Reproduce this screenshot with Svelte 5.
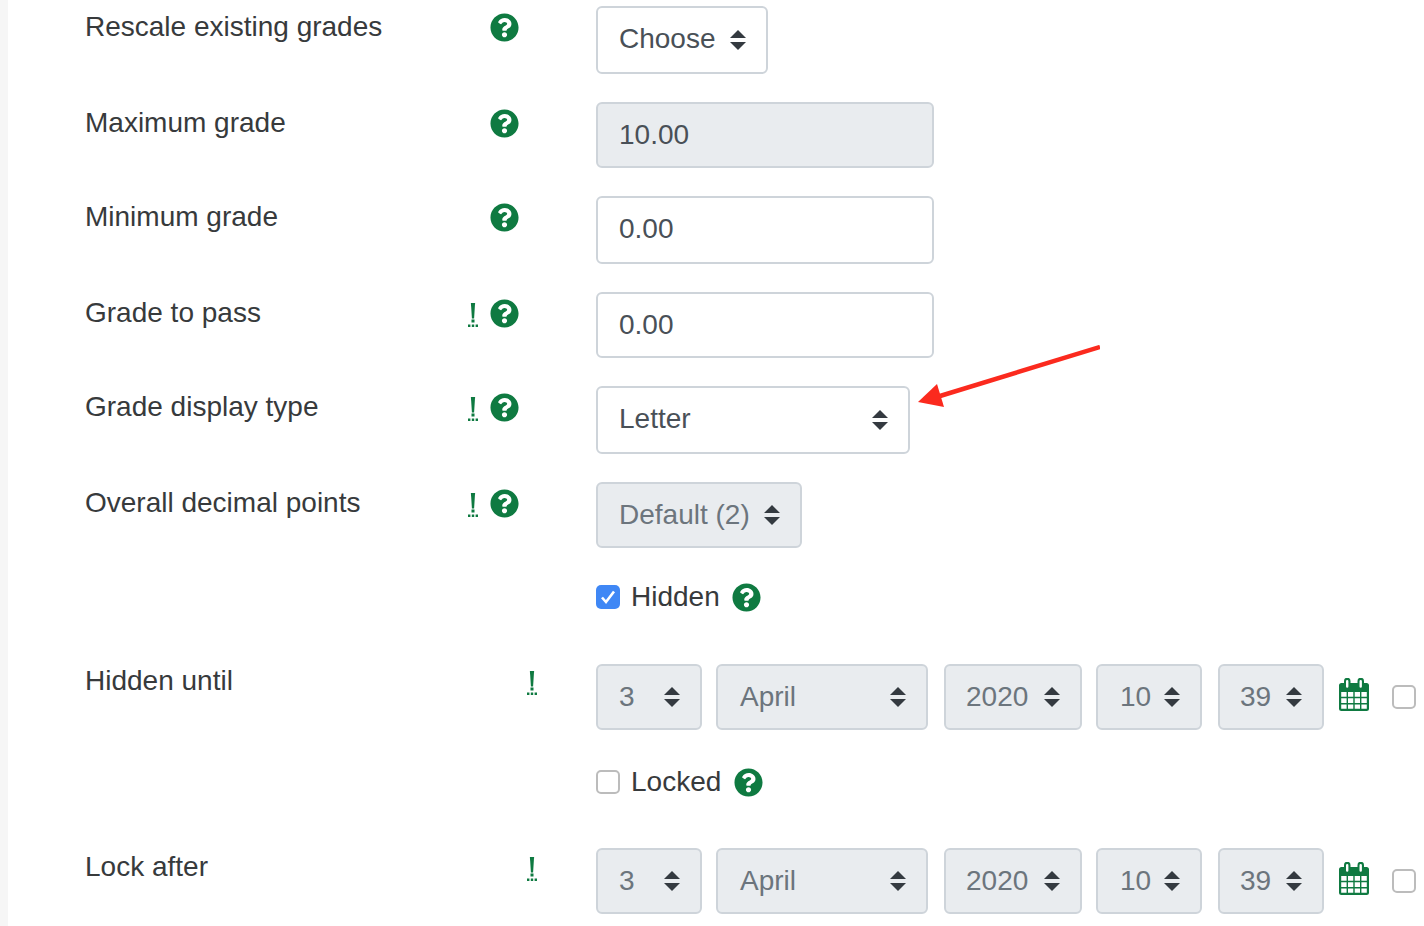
<script>
  const dateParts = [
    { value: '3', width: 106 },
    { value: 'April', width: 212 },
    { value: '2020', width: 138 },
    { value: '10', width: 106 },
    { value: '39', width: 106 }
  ];
  const helpPath = 'M504 256c0 136.997-111.043 248-248 248S8 392.997 8 256C8 119.083 119.043 8 256 8s248 111.083 248 248zM262.655 90c-54.497 0-89.255 22.957-116.549 63.758-3.536 5.286-2.353 12.415 2.715 16.258l34.699 26.31c5.205 3.947 12.621 3.008 16.665-2.122 17.864-22.658 30.113-35.797 57.303-35.797 20.429 0 45.698 13.148 45.698 32.958 0 14.976-12.363 22.667-32.534 33.976C247.128 238.528 216 254.941 216 296v4c0 6.627 5.373 12 12 12h56c6.627 0 12-5.373 12-12v-1.333c0-28.462 83.186-29.647 83.186-106.667 0-58.002-60.165-102-116.531-102zM256 338c-25.365 0-46 20.635-46 46 0 25.364 20.635 46 46 46s46-20.636 46-46c0-25.365-20.635-46-46-46z';
</script>

{#snippet help()}
  <svg class="help" viewBox="0 0 512 512" aria-hidden="true"><path d={helpPath} /></svg>
{/snippet}

{#snippet advanced()}
  <svg class="advanced" viewBox="0 0 10 24" aria-hidden="true">
    <path d="M2.900 0h4.200l-1 15.500H3.900z" />
    <rect x="3.500" y="16.500" width="3" height="3" />
    <rect x="0" y="21.500" width="2.400" height="2.500" />
    <rect x="3.800" y="21.500" width="2.400" height="2.500" />
    <rect x="7.600" y="21.500" width="2.400" height="2.500" />
  </svg>
{/snippet}

{#snippet caret()}
  <svg class="caret" viewBox="0 0 16 20" aria-hidden="true">
    <path d="M8 0l8 8H0zM0 12h16l-8 8z" />
  </svg>
{/snippet}

{#snippet calendar()}
  <svg class="calendar" viewBox="0 0 30 33" aria-hidden="true">
    <path fill-rule="evenodd" d="M2.500 5H5V3a3 3 0 0 1 6.500 0v2h7V3a3 3 0 0 1 6.500 0v2h2.500A2.500 2.500 0 0 1 30 7.500v23a2.500 2.500 0 0 1-2.500 2.500h-25A2.500 2.500 0 0 1 0 30.500v-23A2.500 2.500 0 0 1 2.500 5zM7 3.200v5.300a1.200 1.200 0 0 0 2.400 0V3.200a1.200 1.200 0 0 0-2.400 0zM20.500 3.200v5.300a1.200 1.200 0 0 0 2.400 0V3.200a1.200 1.200 0 0 0-2.400 0zM2.200 14v4.800h5.400V14zM9 14v4.800h5.300V14zM15.700 14v4.800H21V14zM22.400 14v4.800h5.400V14zM2.200 20.200v4.800h5.400v-4.800zM9 20.200v4.800h5.300v-4.800zM15.700 20.200v4.800H21v-4.800zM22.400 20.200v4.800h5.400v-4.800zM2.200 26.400v4.400h5.400v-4.400zM9 26.400v4.400h5.300v-4.400zM15.700 26.400v4.400H21v-4.400zM22.400 26.400v4.400h5.400v-4.400z" />
  </svg>
{/snippet}

{#snippet dateRow()}
  <div class="date-row">
    {#each dateParts as part}
      <div class="control select disabled" style="width: {part.width}px">
        <span>{part.value}</span>
        {@render caret()}
      </div>
    {/each}
    {@render calendar()}
    <span class="checkbox date-check"></span>
  </div>
{/snippet}

<div class="page">
  <div class="row">
    <div class="label-col"><span class="label">Rescale existing grades</span><span class="icons">{@render help()}</span></div>
    <div class="control select auto tall"><span>Choose</span>{@render caret()}</div>
  </div>

  <div class="row">
    <div class="label-col"><span class="label">Maximum grade</span><span class="icons">{@render help()}</span></div>
    <div class="control input disabled"><span>10.00</span></div>
  </div>

  <div class="row">
    <div class="label-col"><span class="label">Minimum grade</span><span class="icons">{@render help()}</span></div>
    <div class="control input tall"><span>0.00</span></div>
  </div>

  <div class="row">
    <div class="label-col"><span class="label">Grade to pass</span><span class="icons">{@render advanced()}{@render help()}</span></div>
    <div class="control input"><span>0.00</span></div>
  </div>

  <div class="row">
    <div class="label-col"><span class="label">Grade display type</span><span class="icons">{@render advanced()}{@render help()}</span></div>
    <div class="control select letter tall"><span>Letter</span>{@render caret()}</div>
  </div>

  <div class="row">
    <div class="label-col"><span class="label">Overall decimal points</span><span class="icons">{@render advanced()}{@render help()}</span></div>
    <div class="control select auto disabled"><span>Default (2)</span>{@render caret()}</div>
  </div>

  <div class="check-row hidden-row">
    <span class="checkbox checked">
      <svg viewBox="0 0 24 24" aria-hidden="true"><path d="M6 12.500l4 4.500 8-10.500" /></svg>
    </span>
    <span class="label">Hidden</span>
    {@render help()}
  </div>

  <div class="row">
    <div class="label-col until"><span class="label">Hidden until</span><span class="icons">{@render advanced()}</span></div>
    {@render dateRow()}
  </div>

  <div class="check-row locked-row">
    <span class="checkbox"></span>
    <span class="label">Locked</span>
    {@render help()}
  </div>

  <div class="row">
    <div class="label-col after"><span class="label">Lock after</span><span class="icons">{@render advanced()}</span></div>
    {@render dateRow()}
  </div>

  <svg class="arrow" viewBox="0 0 190 70" aria-hidden="true">
    <path d="M190 2L30 51" stroke="#fb2a1e" stroke-width="4.500" fill="none" />
    <path d="M8 57L27 39L34 62z" fill="#fb2a1e" />
  </svg>
</div>

<style>
  :global(body) {
    margin: 0;
    background: #fff;
  }

  .page {
    position: relative;
    box-sizing: border-box;
    height: 926px;
    overflow: hidden;
    padding: 6px 0 0 77px;
    border-left: 8px solid #f6f6f6;
    font-family: "Liberation Sans", Arial, sans-serif;
    font-size: 28px;
    color: #373a3c;
  }

  .row {
    display: flex;
    align-items: flex-start;
    margin-bottom: 28px;
  }

  .label-col {
    flex: none;
    width: 511px;
    display: flex;
    justify-content: space-between;
    align-items: flex-start;
    box-sizing: border-box;
    padding-right: 78px;
    height: 42px;
    line-height: 42px;
  }

  .label-col.until {
    margin-top: -4px;
  }

  .label-col.after {
    margin-top: -2px;
  }

  .label {
    white-space: nowrap;
  }

  .icons {
    display: flex;
    align-items: center;
    height: 42px;
  }

  .help {
    flex: none;
    width: 29px;
    height: 29px;
    margin: 0 -0.500px;
    fill: #0f7a41;
  }

  .advanced {
    width: 10px;
    height: 24px;
    margin-right: 12px;
    margin-top: 3px;
    fill: #0f7a41;
  }

  .advanced:last-child {
    margin-left: 9px;
    margin-right: -19px;
  }

  .control {
    box-sizing: border-box;
    height: 66px;
    flex: none;
    display: flex;
    align-items: center;
    border: 2px solid #ced4da;
    border-radius: 6px;
    padding: 0 20px 0 21px;
    background: #fff;
    color: #495057;
    white-space: nowrap;
  }

  .tall {
    height: 68px;
  }

  .tall span {
    margin-top: -2px;
  }

  .input {
    width: 338px;
  }

  .input.disabled {
    background: #e9ecef;
  }

  .select {
    justify-content: space-between;
  }

  .select.auto {
    gap: 14.600px;
  }

  .letter {
    width: 314px;
  }

  .select.disabled {
    background: #e9ecef;
    color: #6c757d;
  }

  .caret {
    flex: none;
    width: 16px;
    height: 20px;
    fill: #343a40;
  }

  .check-row {
    display: flex;
    align-items: center;
    margin-left: 511px;
    height: 42px;
  }

  .hidden-row {
    margin-bottom: 46px;
  }

  .locked-row {
    margin-top: 31px;
    margin-bottom: 45px;
  }

  .check-row .label {
    margin: 0 13px 0 11px;
  }

  .checkbox {
    box-sizing: border-box;
    flex: none;
    width: 24px;
    height: 24px;
    border: 2px solid #bcbcbc;
    border-radius: 5px;
    background: #fff;
  }

  .checked {
    background: #3f87f5;
    border: none;
  }

  .checked svg {
    display: block;
    fill: none;
    stroke: #fff;
    stroke-width: 2.600;
  }

  .date-row {
    display: flex;
    align-items: center;
    gap: 14px;
  }

  .date-row .select:nth-child(even) {
    margin-right: 2px;
    padding-left: 22px;
  }

  .date-row .select:nth-child(3),
  .date-row .select:nth-child(5) {
    padding-left: 20px;
  }

  .calendar {
    flex: none;
    width: 30px;
    height: 33px;
    margin: -5px 0 0 1px;
    fill: #0f7a41;
  }

  .date-check {
    margin-left: 9px;
  }

  .arrow {
    position: absolute;
    left: 902px;
    top: 345px;
    width: 190px;
    height: 70px;
  }
</style>
